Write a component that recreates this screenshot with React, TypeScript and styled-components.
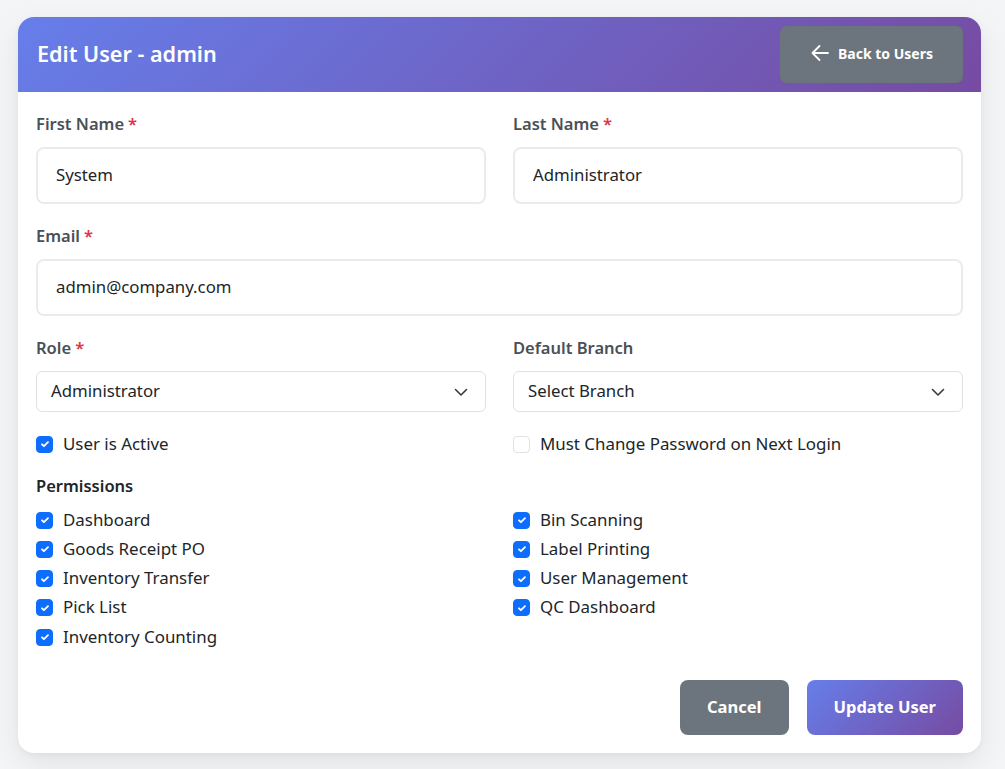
import React from "react";
import styled, { createGlobalStyle, css } from "styled-components";

const GlobalStyle = createGlobalStyle`
  * { box-sizing: border-box; }
  html, body { margin: 0; padding: 0; }
  body {
    background: #f4f5f7;
    font-family: "Noto Sans", "Open Sans", sans-serif;
    color: #212529;
  }
`;

const Page = styled.div`
  padding: 17px 24px 16px 18px;
  min-height: 769px;
`;

const Card = styled.div`
  width: 963px;
  background: #ffffff;
  border-radius: 16px;
  overflow: hidden;
  box-shadow: 0 10px 30px rgba(0, 0, 0, 0.08), 0 2px 6px rgba(0, 0, 0, 0.04);
`;

const Header = styled.div`
  height: 75px;
  display: flex;
  align-items: center;
  justify-content: space-between;
  padding: 0 18px 0 19px;
  background: linear-gradient(135deg, #667eea 0%, #764ba2 100%);
`;

const Title = styled.h1`
  margin: 0 0 2px 0;
  font-size: 21.6px;
  font-weight: 600;
  color: #ffffff;
`;

const BackButton = styled.button`
  height: 57px;
  width: 183px;
  border: none;
  border-radius: 7px;
  background: #6c757d;
  color: #ffffff;
  font-family: inherit;
  font-size: 14px;
  font-weight: 700;
  display: flex;
  align-items: center;
  justify-content: center;
  gap: 8px;
  padding: 0 0 3px 0;
  cursor: pointer;
`;

const Body = styled.div`
  padding: 20px 18px 18px 18px;
`;

const Row = styled.div`
  display: grid;
  grid-template-columns: 1fr 1fr;
  column-gap: 27px;
`;

const Field = styled.div`
  margin-bottom: 20px;
`;

const Label = styled.label<{ $strong?: boolean }>`
  display: block;
  height: 24px;
  line-height: 23px;
  font-size: 16.5px;
  font-weight: 600;
  color: ${(p) => (p.$strong ? "#212529" : "#495057")};
  margin-bottom: 11px;
`;

const Required = styled.span`
  color: #dc3545;
  margin-left: 4px;
`;

const TextInput = styled.input`
  display: block;
  width: 100%;
  height: 57px;
  border: 2px solid #e9ecef;
  border-radius: 8px;
  padding: 0 18px 2px 18px;
  font-family: inherit;
  font-size: 16.8px;
  color: #212529;
  background: #ffffff;
  outline: none;
`;

const SelectBox = styled.div`
  position: relative;
  height: 41px;
  border: 1px solid #dee2e6;
  border-radius: 6px;
  display: flex;
  align-items: center;
  padding: 0 14px 2px 14px;
  font-size: 16.8px;
  color: #212529;
  background: #ffffff;
`;

const Chevron = styled.svg`
  position: absolute;
  right: 16px;
  top: 50%;
  margin-top: -8px;
`;

const CheckRow = styled.label`
  display: flex;
  align-items: center;
  height: 24px;
  font-size: 16.9px;
  color: #212529;
`;

const CheckText = styled.span`
  margin-top: -2px;
`;

const Box = styled.span<{ $checked: boolean }>`
  width: 17px;
  height: 17px;
  border-radius: 4px;
  margin-right: 10px;
  flex: none;
  display: flex;
  align-items: center;
  justify-content: center;
  ${(p) =>
    p.$checked
      ? css`
          background: #0d6efd;
          border: 1px solid #0d6efd;
        `
      : css`
          background: #ffffff;
          border: 1px solid #dee2e6;
        `}
`;

const StatusRow = styled(Row)`
  margin-bottom: 18px;
`;

const PermTitle = styled(Label)`
  margin-bottom: 10px;
`;

const PermColumn = styled.div`
  display: flex;
  flex-direction: column;
  gap: 5.25px;
`;

const Footer = styled.div`
  display: flex;
  justify-content: flex-end;
  gap: 18px;
  margin-top: 31px;
`;

const ActionButton = styled.button<{ $primary?: boolean }>`
  height: 55px;
  border: none;
  border-radius: 8px;
  padding: 0 27px 2px 27px;
  font-family: inherit;
  font-size: 16.5px;
  font-weight: 700;
  color: #ffffff;
  cursor: pointer;
  background: ${(p) =>
    p.$primary ? "linear-gradient(135deg, #667eea 0%, #764ba2 100%)" : "#6c757d"};
`;

const Check = ({ checked, children }: { checked: boolean; children: React.ReactNode }) => (
  <CheckRow>
    <Box $checked={checked}>
      {checked && (
        <svg width="12" height="12" viewBox="0 0 20 20">
          <path
            d="M5 10.5l3.2 3.2L15 7"
            fill="none"
            stroke="#fff"
            strokeWidth="3"
            strokeLinecap="round"
            strokeLinejoin="round"
          />
        </svg>
      )}
    </Box>
    <CheckText>{children}</CheckText>
  </CheckRow>
);

const ChevronIcon = () => (
  <Chevron width="16" height="16" viewBox="0 0 16 16">
    <path d="M2.5 5.5L8 11l5.5-5.5" fill="none" stroke="#343a40" strokeWidth="1.6" strokeLinecap="round" strokeLinejoin="round" />
  </Chevron>
);

const leftPerms = ["Dashboard", "Goods Receipt PO", "Inventory Transfer", "Pick List", "Inventory Counting"];
const rightPerms = ["Bin Scanning", "Label Printing", "User Management", "QC Dashboard"];

export default function App() {
  return (
    <>
      <GlobalStyle />
      <Page>
        <Card>
          <Header>
            <Title>Edit User - admin</Title>
            <BackButton>
              <svg width="20" height="20" viewBox="0 0 20 20">
                <path d="M18 10H2.5M9.5 3L2.5 10l7 7" fill="none" stroke="#fff" strokeWidth="1.8" strokeLinecap="round" strokeLinejoin="round" />
              </svg>
              Back to Users
            </BackButton>
          </Header>
          <Body>
            <Row>
              <Field>
                <Label>
                  First Name<Required>*</Required>
                </Label>
                <TextInput defaultValue="System" />
              </Field>
              <Field>
                <Label>
                  Last Name<Required>*</Required>
                </Label>
                <TextInput defaultValue="Administrator" />
              </Field>
            </Row>
            <Field>
              <Label>
                Email<Required>*</Required>
              </Label>
              <TextInput defaultValue="admin@company.com" />
            </Field>
            <Row>
              <Field>
                <Label>
                  Role<Required>*</Required>
                </Label>
                <SelectBox>
                  Administrator
                  <ChevronIcon />
                </SelectBox>
              </Field>
              <Field>
                <Label>Default Branch</Label>
                <SelectBox>
                  Select Branch
                  <ChevronIcon />
                </SelectBox>
              </Field>
            </Row>
            <StatusRow>
              <Check checked>User is Active</Check>
              <Check checked={false}>Must Change Password on Next Login</Check>
            </StatusRow>
            <PermTitle $strong>Permissions</PermTitle>
            <Row>
              <PermColumn>
                {leftPerms.map((p) => (
                  <Check key={p} checked>
                    {p}
                  </Check>
                ))}
              </PermColumn>
              <PermColumn>
                {rightPerms.map((p) => (
                  <Check key={p} checked>
                    {p}
                  </Check>
                ))}
              </PermColumn>
            </Row>
            <Footer>
              <ActionButton>Cancel</ActionButton>
              <ActionButton $primary>Update User</ActionButton>
            </Footer>
          </Body>
        </Card>
      </Page>
    </>
  );
}
